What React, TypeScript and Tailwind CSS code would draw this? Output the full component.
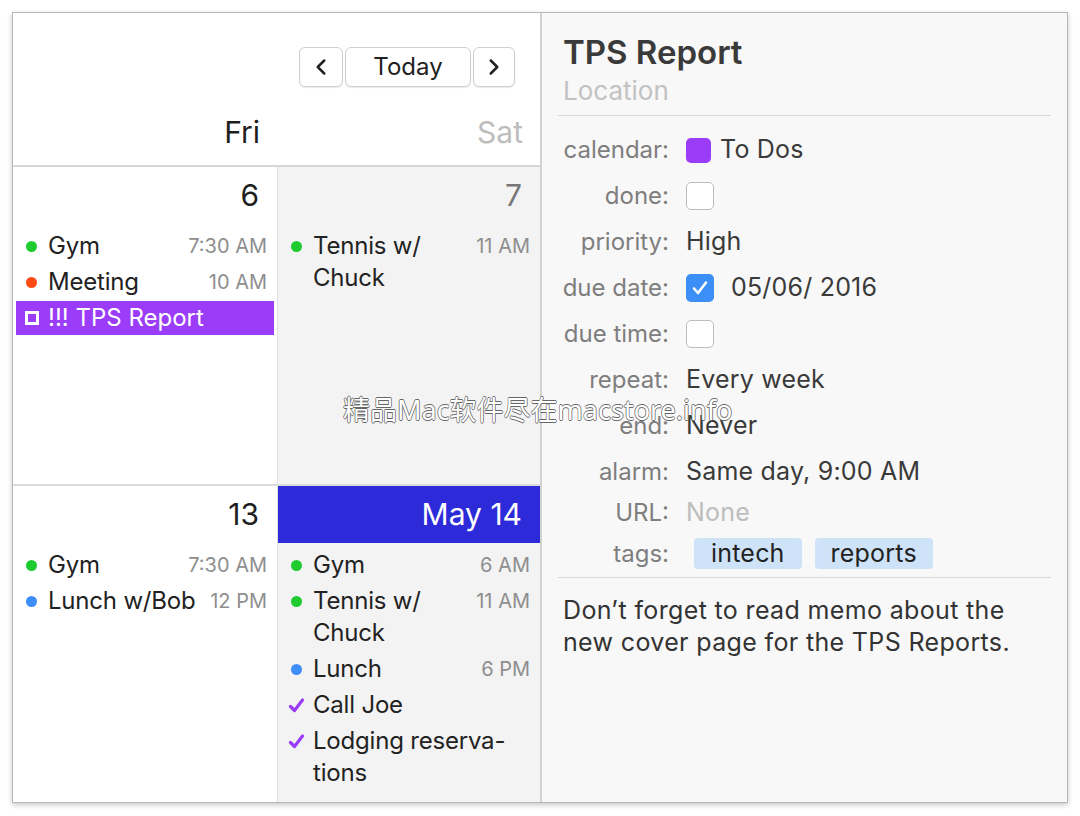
import { ChevronLeft, ChevronRight } from 'lucide-react'

type Ev = {
  kind: 'dot' | 'check' | 'todo'
  color?: string
  lines: string[]
  time?: string
}

const fri6: Ev[] = [
  { kind: 'dot', color: 'bg-[#1fcb2f]', lines: ['Gym'], time: '7:30 AM' },
  { kind: 'dot', color: 'bg-[#fe4a14]', lines: ['Meeting'], time: '10 AM' },
  { kind: 'todo', lines: ['!!! TPS Report'] },
]

const sat7: Ev[] = [
  { kind: 'dot', color: 'bg-[#1fcb2f]', lines: ['Tennis w/', 'Chuck'], time: '11 AM' },
]

const fri13: Ev[] = [
  { kind: 'dot', color: 'bg-[#1fcb2f]', lines: ['Gym'], time: '7:30 AM' },
  { kind: 'dot', color: 'bg-[#3d8ef8]', lines: ['Lunch w/Bob'], time: '12 PM' },
]

const sat14: Ev[] = [
  { kind: 'dot', color: 'bg-[#1fcb2f]', lines: ['Gym'], time: '6 AM' },
  { kind: 'dot', color: 'bg-[#1fcb2f]', lines: ['Tennis w/', 'Chuck'], time: '11 AM' },
  { kind: 'dot', color: 'bg-[#3d8ef8]', lines: ['Lunch'], time: '6 PM' },
  { kind: 'check', lines: ['Call Joe'] },
  { kind: 'check', lines: ['Lodging reserva-', 'tions'] },
]

function EventRow({ ev }: { ev: Ev }) {
  if (ev.kind === 'todo') {
    return (
      <div className="mx-[3px] my-[1px] flex h-[34px] items-center bg-[#9b3df8] text-white">
        <span className="flex w-[32px] justify-center">
          <span className="h-[14px] w-[14px] border-[3px] border-white" />
        </span>
        <span>{ev.lines[0]}</span>
      </div>
    )
  }
  return (
    <div className="flex items-start py-[2px] pl-[2px] pr-[10px] leading-[32px]">
      <span className="flex h-[32px] w-[33px] shrink-0 items-center justify-center">
        {ev.kind === 'dot' ? (
          <span className={`h-[11px] w-[11px] rounded-full ${ev.color}`} />
        ) : (
          <svg width="17" height="15" viewBox="0 0 17 15" className="mt-[1px]">
            <path d="M2.5 8.5 L6.5 12.5 L14.5 2" fill="none" stroke="#9b3df8" strokeWidth="3.2" strokeLinecap="round" strokeLinejoin="round" />
          </svg>
        )}
      </span>
      <span className="tracking-[-0.2px] text-[#222]">
        {ev.lines.map((l, i) => (
          <span key={i} className="block">{l}</span>
        ))}
      </span>
      {ev.time && <span className="ml-auto text-[20px] text-[#8e8e8e]">{ev.time}</span>}
    </div>
  )
}

function DayCell({ num, events, muted, today, shaded }: { num: string; events: Ev[]; muted?: boolean; today?: boolean; shaded?: boolean }) {
  return (
    <div className={`flex h-full flex-col ${shaded ? 'bg-[#f3f3f3]' : 'bg-white'}`}>
      <div
        className={`flex h-[57px] items-center justify-end pr-[18px] text-[30px] ${
          today ? 'bg-[#2d2ad9] text-white' : muted ? 'text-[#777]' : 'text-[#1e1e1e]'
        }`}
      >
        {num}
      </div>
      <div className="pt-[4px] text-[24px]">
        {events.map((ev, i) => (
          <EventRow key={i} ev={ev} />
        ))}
      </div>
    </div>
  )
}

function Checkbox({ checked }: { checked?: boolean }) {
  if (checked) {
    return (
      <span className="flex h-[28px] w-[28px] items-center justify-center rounded-[5px] bg-[#3b8ff6]">
        <svg width="18" height="16" viewBox="0 0 18 16">
          <path d="M3 8.5 L7 13 L15 2.5" fill="none" stroke="white" strokeWidth="2.6" strokeLinecap="round" strokeLinejoin="round" />
        </svg>
      </span>
    )
  }
  return <span className="h-[28px] w-[28px] rounded-[5px] border border-[#bdbdbd] bg-white" />
}

function Row({ label, children, h = 'h-[46px]' }: { label: string; children: React.ReactNode; h?: string }) {
  return (
    <div className={`flex ${h} items-center`}>
      <span className="w-[127px] text-right text-[24px] text-[#7e7e7e]">{label}</span>
      <div className="ml-[17px] flex items-center text-[25px] tracking-[0.2px] text-[#3a3a3a]">{children}</div>
    </div>
  )
}

const btn = 'flex h-[40px] items-center justify-center rounded-[6px] border border-[#cfcfcf] bg-white shadow-[0_1px_1px_rgba(0,0,0,0.08)] text-[#222]'

export default function App() {
  return (
    <div className="relative h-[816px] w-[1080px] bg-white pl-[12px] pt-[12px] font-['Inter','Noto_Sans',sans-serif]">
      <div className="flex h-[791px] w-[1056px] border border-[#b7b7b7] shadow-[0_2px_5px_rgba(0,0,0,0.22)]">
        {/* calendar */}
        <div className="flex w-[529px] flex-col border-r-2 border-[#d2d2d2]">
          <div className="flex h-[154px] flex-col border-b-2 border-[#d6d6d6] bg-white pt-[34px]">
            <div className="flex justify-end gap-[2px] pr-[25px] text-[24px]">
              <button className={`${btn} w-[44px]`}>
                <ChevronLeft size={26} strokeWidth={2.3} />
              </button>
              <button className={`${btn} w-[126px]`}>Today</button>
              <button className={`${btn} w-[42px]`}>
                <ChevronRight size={26} strokeWidth={2.3} />
              </button>
            </div>
            <div className="mt-[27px] grid grid-cols-[265px_262px] text-[30px] leading-[36px]">
              <span className="pr-[18px] text-right text-[#1e1e1e]">Fri</span>
              <span className="pr-[17px] text-right text-[#bdbdbd]">Sat</span>
            </div>
          </div>
          <div className="grid h-[319px] grid-cols-[265px_262px] border-b-2 border-[#dcdcdc]">
            <div className="border-r border-[#e2e2e2]">
              <DayCell num="6" events={fri6} />
            </div>
            <DayCell num="7" events={sat7} muted shaded />
          </div>
          <div className="grid flex-1 grid-cols-[265px_262px]">
            <div className="border-r border-[#e2e2e2]">
              <DayCell num="13" events={fri13} />
            </div>
            <DayCell num="May 14" events={sat14} today shaded />
          </div>
        </div>

        {/* detail */}
        <div className="flex-1 bg-[#f8f8f8]">
          <div className="px-[21px] pt-[17px]">
            <div className="text-[33px] font-semibold leading-[44px] text-[#3a3a3a]">TPS Report</div>
            <div className="text-[26px] leading-[34px] text-[#c2c2c2]">Location</div>
          </div>
          <div className="mx-[16px] mt-[7px] border-t border-[#d8d8d8]" />
          <div className="pt-[11px]">
            <Row label="calendar:">
              <span className="mr-[9px] h-[25px] w-[25px] rounded-[5px] bg-[#9b3df8]" />
              To Dos
            </Row>
            <Row label="done:">
              <Checkbox />
            </Row>
            <Row label="priority:">High</Row>
            <Row label="due date:">
              <Checkbox checked />
              <span className="ml-[17px]">05/06/ 2016</span>
            </Row>
            <Row label="due time:">
              <Checkbox />
            </Row>
            <Row label="repeat:">Every week</Row>
            <Row label="end:">Never</Row>
            <Row label="alarm:">Same day, 9:00 AM</Row>
            <Row label="URL:" h="h-[36px]">
              <span className="text-[#bdbdbd]">None</span>
            </Row>
            <Row label="tags:" h="h-[45px]">
              <div className="ml-[8px] flex gap-[13px] text-[#222]">
                <span className="rounded-[4px] bg-[#cfe3f8] px-[17px] leading-[31px]">intech</span>
                <span className="rounded-[4px] bg-[#cfe3f8] px-[16px] leading-[31px]">reports</span>
              </div>
            </Row>
          </div>
          <div className="mx-[16px] mt-[1px] border-t border-[#d8d8d8]" />
          <p className="px-[21px] pt-[16px] text-[25px] leading-[32px] tracking-[0.35px] text-[#333]">
            Don’t forget to read memo about the
            <br />
            new cover page for the TPS Reports.
          </p>
        </div>
      </div>

      {/* watermark */}
      <div className="absolute left-[343px] top-[392px] whitespace-nowrap font-['Noto_Sans','Noto_Sans_CJK_SC',sans-serif] text-[27px] leading-[36px] text-white [text-shadow:0.7px_0_0_#666,-0.7px_0_0_#666,0_0.7px_0_#666,0_-0.7px_0_#666]">
        精品Mac软件尽在macstore.info
      </div>
    </div>
  )
}
